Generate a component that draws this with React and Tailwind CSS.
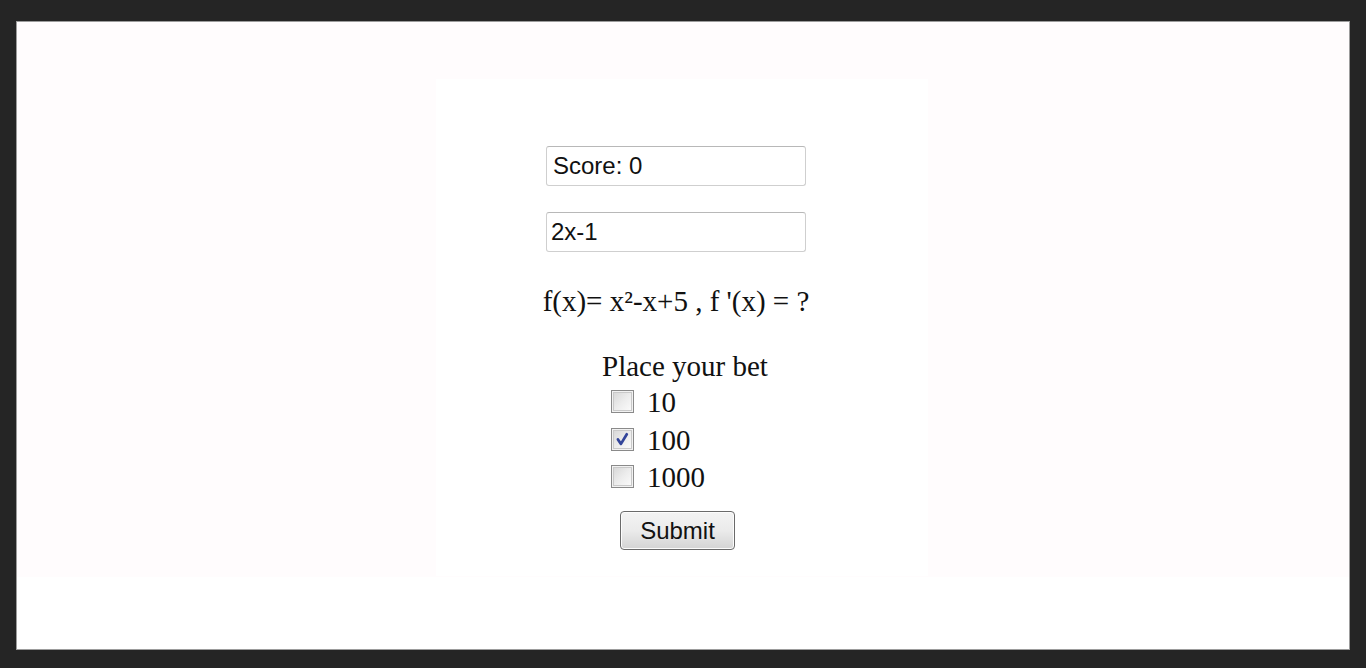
import React from "react";

function Box({ checked }) {
  return (
    <span className="relative inline-block shrink-0 w-[23px] h-[23px] border border-[#8a8a8a] bg-gradient-to-br from-[#d4d4d4] via-[#ececec] to-[#fdfdfd] shadow-[inset_0_0_0_1px_#f2f2f2,inset_0_0_0_2px_#c9c9c9]">
      {checked && (
        <svg viewBox="0 0 23 23" className="absolute inset-0 w-full h-full">
          <path d="M6.5 11.5 L9.8 16.3 L16.2 5.8" fill="none" stroke="#33459a" strokeWidth="3" strokeLinejoin="round" strokeLinecap="round" />
        </svg>
      )}
    </span>
  );
}

export default function App() {
  const serif = { fontFamily: '"Liberation Serif", "Times New Roman", serif' };
  const sans = { fontFamily: '"Liberation Sans", Arial, sans-serif' };
  const rows = [
    { v: "10", c: false },
    { v: "100", c: true },
    { v: "1000", c: false },
  ];
  return (
    <div className="w-[1366px] h-[668px] bg-[#252525] pt-[21px] pl-[16px] pr-[16px] pb-[18px]">
      <div className="h-full bg-white border border-[#9c9c9c] flex flex-col">
        <div className="h-[555px] bg-[#fffcfd] pt-[57px] pl-[419px]">
          <div className="w-[492px] h-[497px] bg-white pt-[67px] pl-[110px]">
            <div className="w-[260px] flex flex-col text-[#111]">
              <div className="h-[40px] border border-[#cfcfcf] border-t-[#b8b8b8] rounded-[3px] bg-white flex items-center pl-[6px] text-[24px]" style={sans}>
                Score: 0
              </div>
              <div className="mt-[26px] h-[40px] border border-[#cfcfcf] border-t-[#b8b8b8] rounded-[3px] bg-white flex items-center pl-[4px] text-[24px]" style={sans}>
                2x-1
              </div>
              <div className="mt-[33px] -mx-[20px] text-center whitespace-nowrap text-[29px] leading-[32px]" style={serif}>
                f(x)= x²-x+5 , f '(x) = ?
              </div>
              <div className="mt-[34px] pl-[56px] text-[29px] leading-[30px] whitespace-nowrap" style={serif}>
                Place your bet
              </div>
              <div className="flex flex-col pl-[65px] mt-[9px] gap-[14.5px]">
                {rows.map((r) => (
                  <div key={r.v} className="flex items-center gap-[13px] h-[23px]">
                    <Box checked={r.c} />
                    <span className="text-[29px] leading-[23px] pt-[2px]" style={serif}>{r.v}</span>
                  </div>
                ))}
              </div>
              <button
                className="mt-[23px] ml-[74px] w-[115px] h-[39px] rounded-[4px] border border-[#6a6a6a] bg-gradient-to-b from-[#f3f3f3] via-[#ebebeb] to-[#d4d4d4] shadow-[inset_0_0_0_1px_#fcfcfc] text-[24px] text-[#111] flex items-center justify-center"
                style={sans}
              >
                Submit
              </button>
            </div>
          </div>
        </div>
      </div>
    </div>
  );
}
